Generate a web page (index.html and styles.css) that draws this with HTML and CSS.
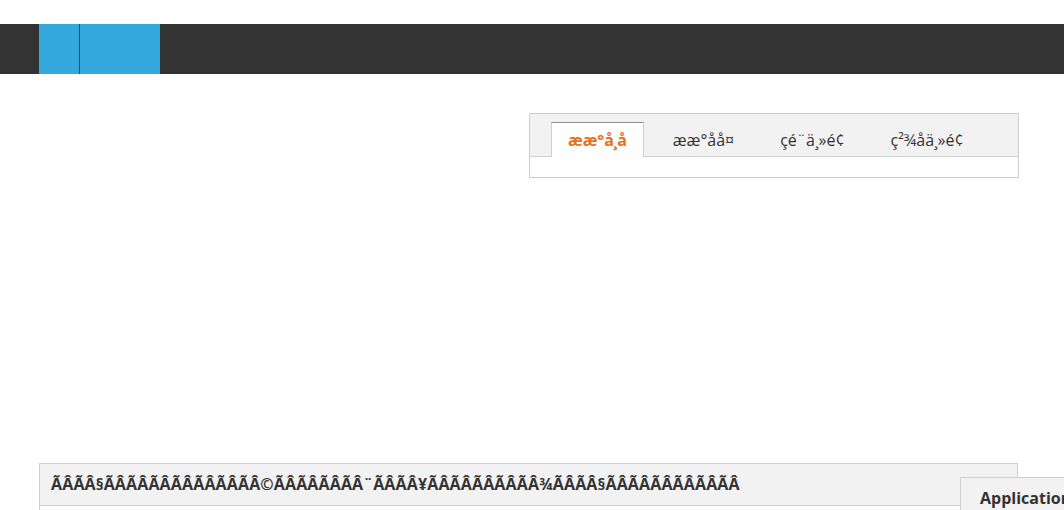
FILE: index.html
```html
<!DOCTYPE html>
<html lang="zh">
<head>
<meta charset="utf-8">
<title>Page</title>
<link rel="stylesheet" href="styles.css">
</head>
<body>
<div class="topbar">
  <a class="nav-item nav-home" href="#"></a>
  <a class="nav-item nav-main" href="#"></a>
</div>
<div class="main">
  <div class="tabs-panel">
    <ul class="tab-strip">
      <li class="tab active">ææ°å¸å</li>
      <li class="tab">ææ°åå¤</li>
      <li class="tab">çé¨ä¸»é¢</li>
      <li class="tab">ç²¾åä¸»é¢</li>
    </ul>
    <div class="tab-body"></div>
  </div>
  <div class="section">
    <div class="section-head">ÃÂÃÂ§ÃÂÃÂÃÂÃÂÃÂÃÂÃÂ©ÃÂÃÂÃÂÃÂ¨ÃÂÃÂ¥ÃÂÃÂÃÂÃÂÃÂ¾ÃÂÃÂ§ÃÂÃÂÃÂÃÂÃÂÃÂ</div>
    <div class="section-body"></div>
  </div>
</div>
<div class="side-box">Application</div>
</body>
</html>
```

FILE: styles.css
```css
html, body {
  margin: 0;
  padding: 0;
  overflow: hidden;
  height: 510px;
  background: #fff;
  font-family: "Open Sans", "Liberation Sans", sans-serif;
  color: #333;
}
body { position: relative; }

.topbar {
  margin-top: 24px;
  height: 50px;
  background: #333333;
  display: flex;
  padding-left: 39px;
}
.nav-item {
  display: block;
  height: 50px;
  background: #33a9dd;
}
.nav-home { width: 40px; }
.nav-main { width: 80px; border-left: 1px solid #1f4d66; }

.main {
  margin-left: 39px;
  width: 979px;
}

.tabs-panel {
  margin-top: 39px;
  margin-left: 490px;
  width: 488px;
  border: 1px solid #cfcfcf;
}
.tab-strip {
  list-style: none;
  margin: 0;
  padding: 8px 0 0 21px;
  height: 34px;
  background: #f2f2f2;
  border-bottom: 1px solid #cfcfcf;
  display: flex;
  align-items: flex-end;
  gap: 12px;
}
.tab {
  height: 34px;
  line-height: 34px;
  padding: 0 16px;
  font-size: 16px;
  color: #333;
  margin-bottom: -1px;
  border: 1px solid transparent;
  border-bottom: none;
  white-space: nowrap;
}
.tab.active {
  background: #fff;
  color: #e8711f;
  font-weight: 700;
  border-color: #cfcfcf;
  border-top-color: #8c8c8c;
}
.tab-body { height: 20px; }

.section {
  margin-top: 285px;
  border: 1px solid #cfcfcf;
  border-bottom: none;
  background: #fff;
}
.section-head {
  height: 41px;
  line-height: 40px;
  padding-left: 11px;
  font-size: 16px;
  font-weight: 700;
  letter-spacing: 0.15px;
  color: #333;
  background: #f2f2f2;
  white-space: nowrap;
  overflow: hidden;
  border-bottom: 1px solid #cfcfcf;
}
.section-body { height: 20px; }

.side-box {
  position: absolute;
  left: 960px;
  top: 477px;
  width: 200px;
  height: 60px;
  box-sizing: border-box;
  padding: 9px 0 0 19px;
  background: #f2f2f2;
  border: 1px solid #cfcfcf;
  font-size: 16px;
  font-weight: 700;
  color: #333;
}
```
